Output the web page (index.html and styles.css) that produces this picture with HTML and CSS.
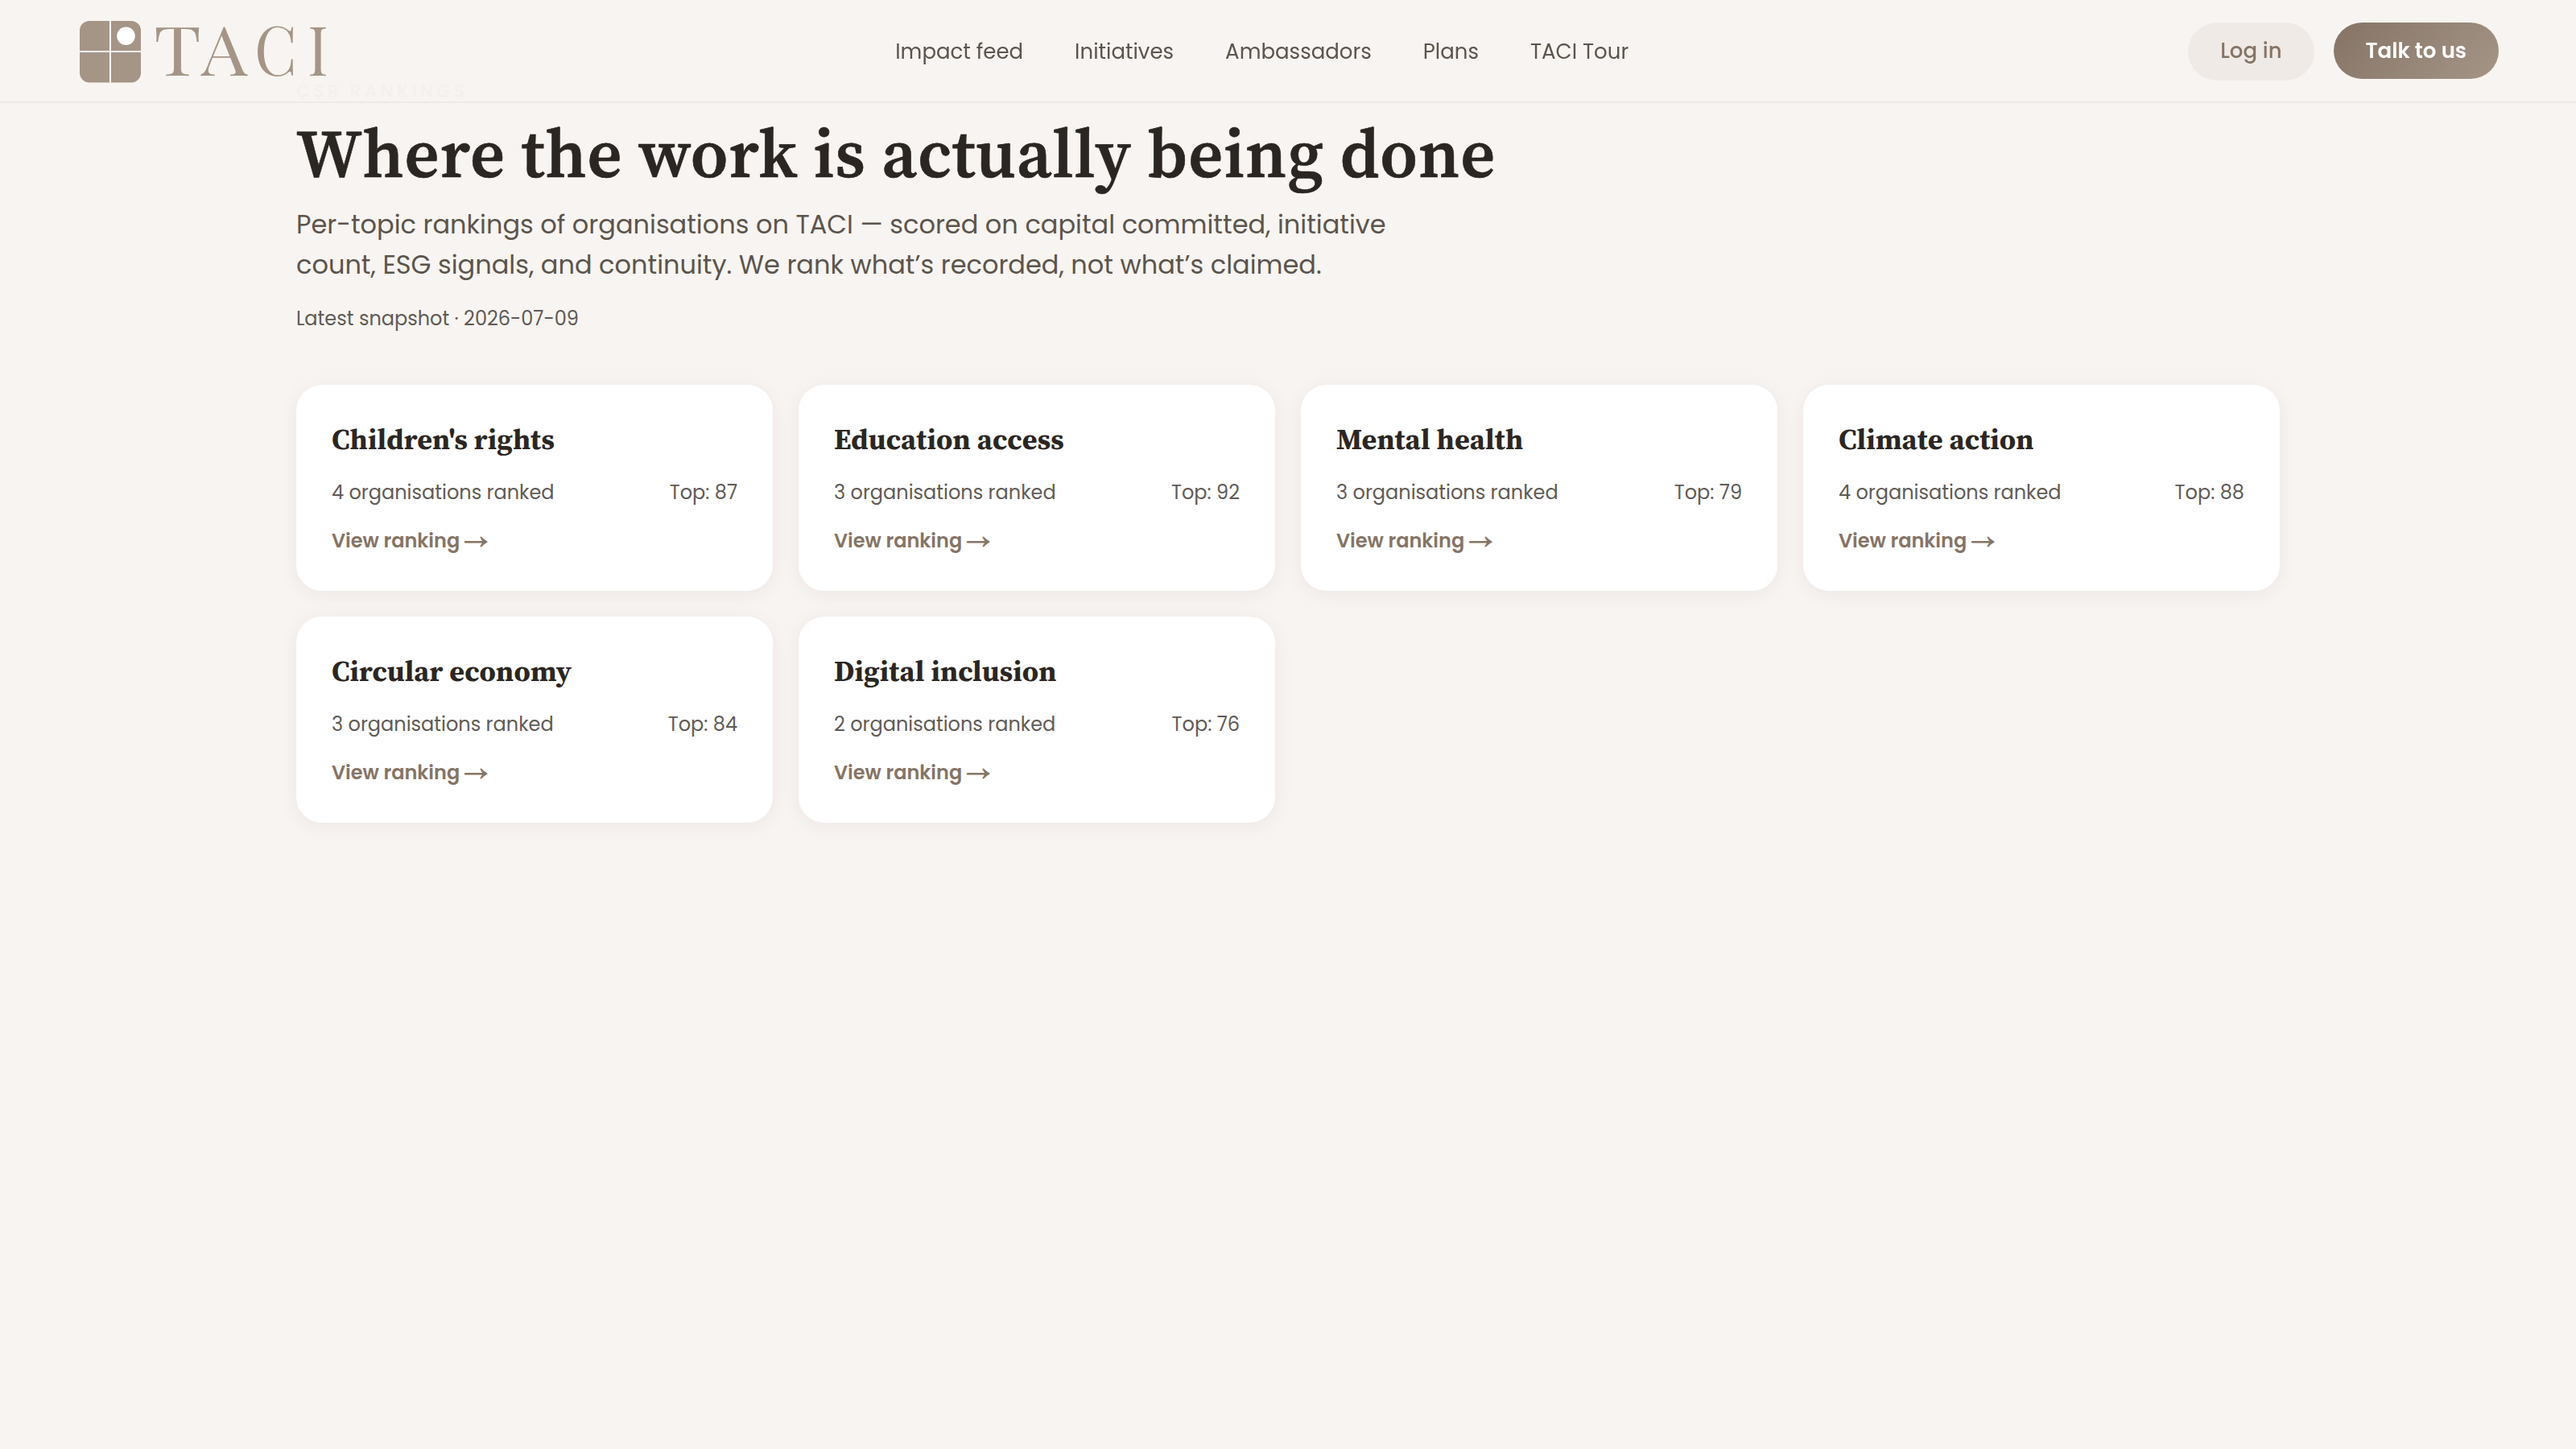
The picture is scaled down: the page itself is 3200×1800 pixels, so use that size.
FILE: index.html
```html
<!DOCTYPE html>
<html lang="en">
<head>
  <meta charset="UTF-8">
  <meta name="viewport" content="width=device-width, initial-scale=1.0">
  <title>CSR Rankings | TACI</title>
  <link rel="stylesheet" href="styles.css">
</head>
<body>
  <header class="site-header">
    <a class="logo" href="#" aria-label="TACI">
      <svg width="321" height="126" viewBox="0 0 321 126">
        <rect x="3" y="26" width="76" height="76.5" rx="12" fill="#a59586"/>
        <path d="M41 26v76.5M3 64h76" stroke="#fff" stroke-width="2"/>
        <circle cx="60.5" cy="44.7" r="11.3" fill="#fff"/>
        <g class="logo-text">
          <text x="95" y="94" textLength="59" lengthAdjust="spacingAndGlyphs">T</text>
          <text x="154" y="94" textLength="57" lengthAdjust="spacingAndGlyphs">A</text>
          <text x="220" y="94" textLength="53" lengthAdjust="spacingAndGlyphs">C</text>
          <text x="286" y="94" textLength="26" lengthAdjust="spacingAndGlyphs">I</text>
        </g>
      </svg>
    </a>
    <nav class="nav">
      <a href="#">Impact feed</a>
      <a href="#">Initiatives</a>
      <a href="#">Ambassadors</a>
      <a href="#">Plans</a>
      <a href="#">TACI Tour</a>
    </nav>
    <div class="actions">
      <a class="btn btn-soft" href="#">Log in</a>
      <a class="btn btn-primary" href="#">Talk to us</a>
    </div>
  </header>

  <main class="page">
    <p class="eyebrow">CSR RANKINGS</p>
    <h1>Where the work is actually being done</h1>
    <p class="lead">Per-topic rankings of organisations on TACI — scored on capital committed, initiative count, ESG signals, and continuity. We rank what’s recorded, not what’s claimed.</p>
    <p class="snapshot">Latest snapshot · 2026-07-09</p>

    <div class="grid">
      <a class="card" href="#">
        <h2>Children's rights</h2>
        <div class="meta"><span>4 organisations ranked</span><span>Top: 87</span></div>
        <span class="more">View ranking <span class="arrow">→</span></span>
      </a>
      <a class="card" href="#">
        <h2>Education access</h2>
        <div class="meta"><span>3 organisations ranked</span><span>Top: 92</span></div>
        <span class="more">View ranking <span class="arrow">→</span></span>
      </a>
      <a class="card" href="#">
        <h2>Mental health</h2>
        <div class="meta"><span>3 organisations ranked</span><span>Top: 79</span></div>
        <span class="more">View ranking <span class="arrow">→</span></span>
      </a>
      <a class="card" href="#">
        <h2>Climate action</h2>
        <div class="meta"><span>4 organisations ranked</span><span>Top: 88</span></div>
        <span class="more">View ranking <span class="arrow">→</span></span>
      </a>
      <a class="card" href="#">
        <h2>Circular economy</h2>
        <div class="meta"><span>3 organisations ranked</span><span>Top: 84</span></div>
        <span class="more">View ranking <span class="arrow">→</span></span>
      </a>
      <a class="card" href="#">
        <h2>Digital inclusion</h2>
        <div class="meta"><span>2 organisations ranked</span><span>Top: 76</span></div>
        <span class="more">View ranking <span class="arrow">→</span></span>
      </a>
    </div>
  </main>
</body>
</html>
```
FILE: styles.css
```css
* {
  box-sizing: border-box;
}
body {
  margin: 0;
  min-height: 100vh;
  background: #f8f4f1;
  color: #5c544d;
  font-family: Poppins, Inter, sans-serif;
  font-size: 26px;
}
a {
  color: inherit;
  text-decoration: none;
}
h1, h2, p {
  margin: 0;
}
h1, h2 {
  font-family: "Source Serif 4", "Liberation Serif", serif;
  color: #2b2622;
}

/* header */
.site-header {
  position: fixed;
  top: 0;
  left: 0;
  right: 0;
  height: 128px;
  padding: 0 96px;
  display: flex;
  justify-content: space-between;
  align-items: center;
  background: rgba(248, 244, 241, 0.97);
  border-bottom: 2px solid #ede9e5;
  z-index: 10;
}
.logo,
.logo svg {
  display: block;
}
.logo-text {
  fill: #a59586;
  font-family: "Playfair Display", "Liberation Serif", serif;
  font-size: 85px;
}
.nav {
  display: flex;
  gap: 64px;
  padding-top: 2px;
}
.actions {
  display: flex;
  align-items: flex-start;
  gap: 24px;
  padding-top: 2px;
}
.btn {
  padding: 0 40px;
  height: 70px;
  line-height: 70px;
  border-radius: 36px;
}
.btn-soft {
  height: 72px;
  background: #efeae6;
  color: #857466;
  font-weight: 500;
}
.btn-primary {
  background: linear-gradient(135deg, #857466, #a59586);
  color: #fff;
  font-weight: 600;
}

/* content */
.page {
  width: 2464px;
  margin: 0 auto;
  padding: 97px 0 160px;
}
.eyebrow {
  font-size: 22px;
  line-height: 33px;
  font-weight: 600;
  letter-spacing: 0.19em;
  color: #857466;
}
h1 {
  margin-top: 13px;
  font-size: 84px;
  line-height: 1.15;
  font-weight: 600;
  letter-spacing: 0.95px;
  -webkit-text-stroke: 0.6px #2b2622;
}
.lead {
  max-width: 1400px;
  margin-top: 14px;
  font-size: 32px;
  line-height: 50px;
}
.snapshot {
  margin-top: 24px;
  font-size: 24px;
  line-height: 36px;
  color: #5f5a56;
}
.grid {
  display: grid;
  grid-template-columns: repeat(4, 1fr);
  gap: 32px;
  margin-top: 64px;
}
.card {
  height: 256px;
  padding: 45px 44px 43px;
  background: #fff;
  border-radius: 32px;
  box-shadow: 0 4px 24px rgba(43, 38, 34, 0.06);
  font-size: 24px;
  line-height: 36px;
  color: #5f5a56;
}
.card h2 {
  font-size: 36px;
  line-height: 45px;
  font-weight: 700;
  letter-spacing: 0.17px;
}
.meta {
  display: flex;
  justify-content: space-between;
  margin-top: 26px;
}
.more {
  display: block;
  height: 36px;
  margin-top: 24px;
  color: #857466;
  font-weight: 600;
}
.arrow {
  margin-left: -1px;
  font-family: "EB Garamond", "Liberation Serif", serif;
  font-size: 30px;
  line-height: 1;
  vertical-align: -2px;
  -webkit-text-stroke: 0.8px #857466;
}
```
